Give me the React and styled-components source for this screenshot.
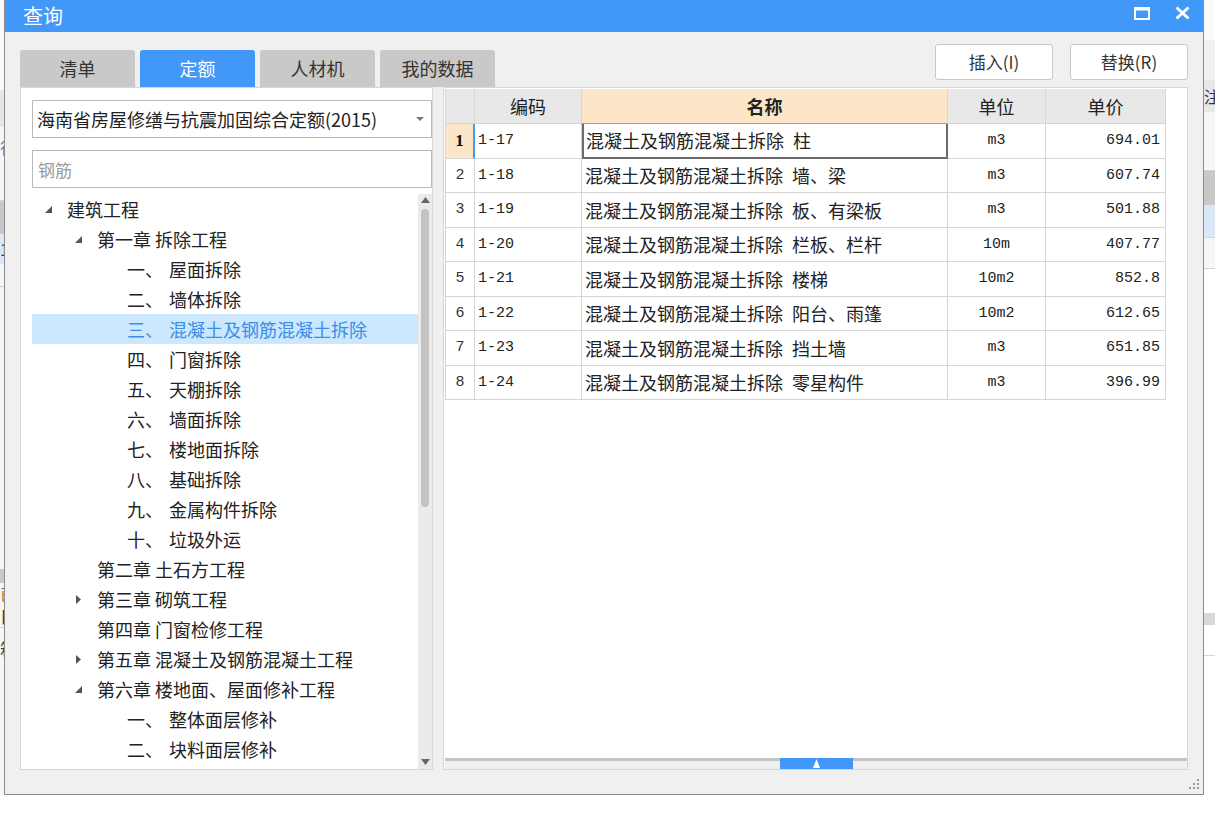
import React from "react";
import styled, { createGlobalStyle } from "styled-components";

const GlobalStyle = createGlobalStyle`
  html, body {
    margin: 0;
    padding: 0;
    background: #fff;
  }
  body {
    font-family: "Noto Sans CJK SC", "Microsoft YaHei", sans-serif;
    color: #222;
  }
`;

const BLUE = "#4298f8";

// 화면 전체
const Screen = styled.div`
  width: 1215px;
  height: 838px;
  display: flex;
  align-items: flex-start;
  background: #fff;
  overflow: hidden;
`;

// 뒤쪽 프로그램 일부
const Strip = styled.div`
  width: ${(p) => p.$w}px;
  height: 795px;
  flex-shrink: 0;
  display: flex;
  flex-direction: column;
  background: #f7f7f7;
  overflow: hidden;
`;

const Band = styled.div`
  height: ${(p) => p.$h}px;
  flex-shrink: 0;
  background: ${(p) => p.$bg || "transparent"};
  border-bottom: ${(p) => (p.$line ? "1px solid #d4d4d4" : "none")};
  font-size: 16px;
  line-height: ${(p) => p.$h}px;
  color: ${(p) => p.$color || "#333"};
  white-space: nowrap;
  overflow: hidden;
`;

const Dialog = styled.div`
  width: 1200px;
  height: 795px;
  flex-shrink: 0;
  box-sizing: border-box;
  border: 1px solid #8c8c8c;
  border-top: none;
  background: #f0f0f0;
  display: flex;
  flex-direction: column;
`;

const TitleBar = styled.div`
  height: 32px;
  flex-shrink: 0;
  background: ${BLUE};
  display: flex;
  align-items: center;
  justify-content: space-between;
  padding: 0 13px 0 18px;
`;

const Title = styled.div`
  color: #fff;
  font-size: 20px;
  line-height: 32px;
`;

const WinButtons = styled.div`
  display: flex;
  align-items: center;
  gap: 25px;
  margin-top: -6px;
`;

const Toolbar = styled.div`
  height: 55px;
  flex-shrink: 0;
  display: flex;
  justify-content: space-between;
  padding: 0 15px;
`;

const Tabs = styled.div`
  align-self: flex-end;
  display: flex;
  gap: 5px;
`;

const Tab = styled.div`
  width: 115px;
  height: 37px;
  border-radius: 3px 3px 0 0;
  background: ${(p) => (p.$active ? BLUE : "#c9c9c9")};
  color: ${(p) => (p.$active ? "#fff" : "#333")};
  font-size: 18px;
  line-height: 37px;
  text-align: center;
`;

const Buttons = styled.div`
  display: flex;
  gap: 17px;
  padding-top: 12px;
`;

const Button = styled.div`
  width: 118px;
  height: 36px;
  box-sizing: border-box;
  background: #fff;
  border: 1px solid #c8c8c8;
  border-radius: 3px;
  font-size: 17px;
  line-height: 34px;
  text-align: center;
  color: #333;
`;

const Main = styled.div`
  flex: 1;
  display: flex;
  gap: 10px;
  padding: 0 15px;
  min-height: 0;
`;

const LeftPanel = styled.div`
  width: 413px;
  flex-shrink: 0;
  box-sizing: border-box;
  background: #fff;
  border: 1px solid #d6d6d6;
  padding: 12px 0 0 11px;
  display: flex;
  flex-direction: column;
`;

const Select = styled.div`
  height: 38px;
  flex-shrink: 0;
  box-sizing: border-box;
  border: 1px solid #b9b9b9;
  display: flex;
  align-items: center;
  justify-content: space-between;
  padding: 0 7px 0 4px;
  font-size: 18px;
  color: #222;
  margin-bottom: 12px;
`;

const Search = styled.div`
  height: 38px;
  flex-shrink: 0;
  box-sizing: border-box;
  border: 1px solid #b9b9b9;
  display: flex;
  align-items: center;
  padding: 0 5px;
  font-size: 17px;
  color: #9a9a9a;
  margin-bottom: 6px;
`;

const TreeBox = styled.div`
  flex: 1;
  display: flex;
  min-height: 0;
`;

const TreeList = styled.div`
  flex: 1;
  overflow: hidden;
`;

const TreeRow = styled.div`
  height: 30px;
  display: flex;
  align-items: center;
  padding-left: ${(p) => 11 + p.$level * 30}px;
  background: ${(p) => (p.$selected ? "#cce8ff" : "transparent")};
  color: ${(p) => (p.$selected ? "#3a8ee8" : "#222")};
  font-size: 18px;
  line-height: 28px;
  white-space: nowrap;
`;

const Toggle = styled.span`
  width: 24px;
  flex-shrink: 0;
  display: flex;
  align-items: center;
`;

const Marker = styled.span`
  width: 42px;
  flex-shrink: 0;
`;

const VScroll = styled.div`
  width: 14px;
  flex-shrink: 0;
  background: #ebebeb;
  display: flex;
  flex-direction: column;
  align-items: center;
  padding: 3px 0 4px;
  box-sizing: border-box;
`;

const Thumb = styled.div`
  width: 8px;
  height: 298px;
  margin-top: 6px;
  border-radius: 4px;
  background: #c3c3c3;
`;

const Spacer = styled.div`
  flex: 1;
`;

const RightPanel = styled.div`
  flex: 1;
  box-sizing: border-box;
  background: #fff;
  border: 1px solid #d6d6d6;
  padding: 1px 0 0 1px;
  display: flex;
  flex-direction: column;
`;

const TableArea = styled.div`
  flex: 1;
`;

const Grid = styled.div`
  width: 721px;
  border-left: 1px solid #d6d6d6;
`;

const GridRow = styled.div`
  display: grid;
  grid-template-columns: 29px 107px 366px 98px 120px;
  height: ${(p) => (p.$head ? 35 : 34.5)}px;
`;

const Cell = styled.div`
  box-sizing: border-box;
  border-right: 1px solid #d6d6d6;
  border-bottom: 1px solid ${(p) => p.$bottom || "#d6d6d6"};
  background: ${(p) => p.$bg || "#fff"};
  display: flex;
  align-items: center;
  justify-content: ${(p) => p.$align || "flex-start"};
  padding: 0 ${(p) => p.$pad || 0}px;
  white-space: nowrap;
  overflow: hidden;
`;

const HeadText = styled.span`
  font-size: 18px;
  font-weight: ${(p) => (p.$bold ? 700 : 400)};
  color: #222;
`;

const Mono = styled.span`
  font-family: "Liberation Mono", "DejaVu Sans Mono", monospace;
  font-size: 15px;
  color: #222;
`;

const NameText = styled.span`
  font-size: 18px;
  color: #222;
`;

const RowNum = styled.span`
  font-family: ${(p) => (p.$bold ? '"Liberation Serif", serif' : '"Liberation Mono", monospace')};
  font-weight: ${(p) => (p.$bold ? 700 : 400)};
  font-size: ${(p) => (p.$bold ? 17 : 15)}px;
  color: ${(p) => (p.$bold ? "#111" : "#333")};
`;

const HBar = styled.div`
  height: 11px;
  flex-shrink: 0;
  box-sizing: border-box;
  border-top: 3px solid #c4c4c4;
  background: #f0f0f0;
  display: flex;
  justify-content: center;
`;

const HHandle = styled.div`
  width: 73px;
  height: 11px;
  margin-top: -3px;
  background: ${BLUE};
  display: flex;
  align-items: flex-end;
  justify-content: center;
  padding-bottom: 1px;
  box-sizing: border-box;
`;

const Footer = styled.div`
  height: 21px;
  flex-shrink: 0;
  display: flex;
  justify-content: flex-end;
  align-items: flex-end;
  padding: 0 4px 3px 0;
`;

const tree = [
  { level: 0, label: "建筑工程", state: "open" },
  { level: 1, label: "第一章 拆除工程", state: "open" },
  { level: 2, mark: "一、", label: "屋面拆除" },
  { level: 2, mark: "二、", label: "墙体拆除" },
  { level: 2, mark: "三、", label: "混凝土及钢筋混凝土拆除", selected: true },
  { level: 2, mark: "四、", label: "门窗拆除" },
  { level: 2, mark: "五、", label: "天棚拆除" },
  { level: 2, mark: "六、", label: "墙面拆除" },
  { level: 2, mark: "七、", label: "楼地面拆除" },
  { level: 2, mark: "八、", label: "基础拆除" },
  { level: 2, mark: "九、", label: "金属构件拆除" },
  { level: 2, mark: "十、", label: "垃圾外运" },
  { level: 1, label: "第二章 土石方工程" },
  { level: 1, label: "第三章 砌筑工程", state: "closed" },
  { level: 1, label: "第四章 门窗检修工程" },
  { level: 1, label: "第五章 混凝土及钢筋混凝土工程", state: "closed" },
  { level: 1, label: "第六章 楼地面、屋面修补工程", state: "open" },
  { level: 2, mark: "一、", label: "整体面层修补" },
  { level: 2, mark: "二、", label: "块料面层修补" },
  { level: 2, mark: "三、", label: "瓦屋面修补拆除" },
];

const rows = [
  ["1-17", "混凝土及钢筋混凝土拆除 柱", "m3", "694.01"],
  ["1-18", "混凝土及钢筋混凝土拆除 墙、梁", "m3", "607.74"],
  ["1-19", "混凝土及钢筋混凝土拆除 板、有梁板", "m3", "501.88"],
  ["1-20", "混凝土及钢筋混凝土拆除 栏板、栏杆", "10m", "407.77"],
  ["1-21", "混凝土及钢筋混凝土拆除 楼梯", "10m2", "852.8"],
  ["1-22", "混凝土及钢筋混凝土拆除 阳台、雨篷", "10m2", "612.65"],
  ["1-23", "混凝土及钢筋混凝土拆除 挡土墙", "m3", "651.85"],
  ["1-24", "混凝土及钢筋混凝土拆除 零星构件", "m3", "396.99"],
];

function Arrow({ state }) {
  if (state === "open")
    return (
      <svg width="9" height="9" style={{ marginLeft: 1 }}>
        <path d="M8 1 L8 8 L1 8 Z" fill="#555" />
      </svg>
    );
  if (state === "closed")
    return (
      <svg width="7" height="11" style={{ marginLeft: 2 }}>
        <path d="M1 1 L6 5.5 L1 10 Z" fill="#555" />
      </svg>
    );
  return null;
}

function Tri({ dir, color = "#666", w = 9, h = 5 }) {
  const d = dir === "up" ? `M0 ${h} L${w / 2} 0 L${w} ${h} Z` : `M0 0 L${w} 0 L${w / 2} ${h} Z`;
  return (
    <svg width={w} height={h}>
      <path d={d} fill={color} />
    </svg>
  );
}

function App() {
  return (
    <>
      <GlobalStyle />
      <Screen>
        <Strip $w={4}>
          <Band $h={90} $bg="#fafafa" />
          <Band $h={37} $bg="#e6e6e6" />
          <Band $h={40} $color="#3a8ee8">行</Band>
          <Band $h={33} $line />
          <Band $h={33} $bg="#c8c8c8" />
          <Band $h={30} $bg="#dbe8f8">1</Band>
          <Band $h={22} $line />
          <Band $h={282} />
          <Band $h={14} $bg="#c8c8c8" />
          <Band $h={22} $color="#c07020">已</Band>
          <Band $h={22} $line>日</Band>
          <Band $h={40}>箱</Band>
        </Strip>

        <Dialog>
          <TitleBar>
            <Title>查询</Title>
            <WinButtons>
              <svg width="16" height="13">
                <rect x="1" y="1.5" width="14" height="10.5" fill="none" stroke="#fff" strokeWidth="2" />
                <rect x="0" y="0" width="16" height="3.5" fill="#fff" />
              </svg>
              <svg width="15" height="14">
                <path d="M1.5 1.5 L13.5 12.5 M13.5 1.5 L1.5 12.5" stroke="#fff" strokeWidth="3" />
              </svg>
            </WinButtons>
          </TitleBar>

          <Toolbar>
            <Tabs>
              <Tab>清单</Tab>
              <Tab $active>定额</Tab>
              <Tab>人材机</Tab>
              <Tab>我的数据</Tab>
            </Tabs>
            <Buttons>
              <Button>插入(I)</Button>
              <Button>替换(R)</Button>
            </Buttons>
          </Toolbar>

          <Main>
            <LeftPanel>
              <Select>
                <span>海南省房屋修缮与抗震加固综合定额(2015)</span>
                <Tri dir="down" color="#777" w={8} h={4} />
              </Select>
              <Search>钢筋</Search>
              <TreeBox>
                <TreeList>
                  {tree.map((t, i) => (
                    <TreeRow key={i} $level={t.level} $selected={t.selected}>
                      <Toggle>
                        <Arrow state={t.state} />
                      </Toggle>
                      {t.mark && <Marker>{t.mark}</Marker>}
                      <span>{t.label}</span>
                    </TreeRow>
                  ))}
                </TreeList>
                <VScroll>
                  <Tri dir="up" w={9} h={6} />
                  <Thumb />
                  <Spacer />
                  <Tri dir="down" w={9} h={6} />
                </VScroll>
              </TreeBox>
            </LeftPanel>

            <RightPanel>
              <TableArea>
                <Grid>
                  <GridRow $head>
                    <Cell $bg="#e8e8e8" />
                    <Cell $bg="#e8e8e8" $align="center">
                      <HeadText>编码</HeadText>
                    </Cell>
                    <Cell $bg="#fde6c8" $align="center" $bottom="#6aaaf0">
                      <HeadText $bold>名称</HeadText>
                    </Cell>
                    <Cell $bg="#e8e8e8" $align="center">
                      <HeadText>单位</HeadText>
                    </Cell>
                    <Cell $bg="#e8e8e8" $align="center">
                      <HeadText>单价</HeadText>
                    </Cell>
                  </GridRow>
                  {rows.map((r, i) => {
                    const cur = i === 0;
                    return (
                      <GridRow key={r[0]}>
                        <Cell
                          $bg={cur ? "#fde6c8" : "#fff"}
                          $align="center"
                          style={cur ? { borderRight: "2px solid #4a9af0" } : undefined}
                        >
                          <RowNum $bold={cur}>{i + 1}</RowNum>
                        </Cell>
                        <Cell $pad={3}>
                          <Mono>{r[0]}</Mono>
                        </Cell>
                        <Cell
                          $pad={3}
                          style={
                            cur
                              ? { border: "2px solid #6b6b6b", borderTop: "none", paddingLeft: 2 }
                              : undefined
                          }
                        >
                          <NameText>{r[1].replace(" ", "\u2002")}</NameText>
                        </Cell>
                        <Cell $align="center">
                          <Mono>{r[2]}</Mono>
                        </Cell>
                        <Cell $align="flex-end" $pad={5}>
                          <Mono>{r[3]}</Mono>
                        </Cell>
                      </GridRow>
                    );
                  })}
                </Grid>
              </TableArea>
              <HBar>
                <HHandle>
                  <Tri dir="up" color="#fff" w={7} h={9} />
                </HHandle>
              </HBar>
            </RightPanel>
          </Main>

          <Footer>
            <svg width="10" height="12">
              <g fill="#9a9a9a">
                <rect x="8" y="0" width="2" height="2" />
                <rect x="8" y="4" width="2" height="2" />
                <rect x="4" y="4" width="2" height="2" />
                <rect x="8" y="8" width="2" height="2" />
                <rect x="4" y="8" width="2" height="2" />
                <rect x="0" y="8" width="2" height="2" />
              </g>
            </svg>
          </Footer>
        </Dialog>

        <Strip $w={11}>
          <Band $h={40} $bg="#fafafa" />
          <Band $h={40} $bg="#f0f0f0" />
          <Band $h={32} $bg="#e8e8e8">注</Band>
          <Band $h={58} $line />
          <Band $h={34} $bg="#c8c8c8" />
          <Band $h={32} $bg="#dbe8f8" $line />
          <Band $h={30} $line />
          <Band $h={344} $bg="#fff" />
          <Band $h={12} $bg="#d8d8d8" />
          <Band $h={30} $line $bg="#fff" />
          <Band $h={143} $bg="#fff" />
        </Strip>
      </Screen>
    </>
  );
}

export default App;
